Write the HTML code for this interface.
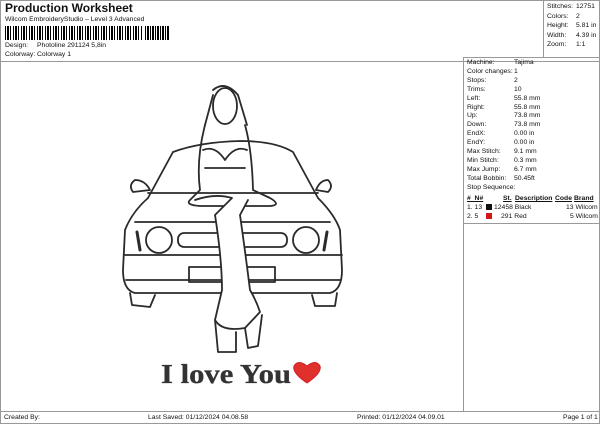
<!DOCTYPE html>
<html><head><meta charset="utf-8"><style>
*{margin:0;padding:0;box-sizing:border-box}
body{width:600px;height:424px;background:#fff;font-family:"Liberation Sans",sans-serif;color:#111;position:relative;overflow:hidden;font-size:6.8px}
.a{position:absolute;white-space:nowrap}
.ln{position:absolute;background:#999}
</style></head><body>
<div class="ln" style="left:0;top:0;width:1px;height:424px"></div>
<div class="ln" style="left:599px;top:0;width:1px;height:424px"></div>
<div class="ln" style="left:0;top:0;width:600px;height:1px"></div>
<div class="ln" style="left:0;top:61px;width:600px;height:1px"></div>
<div class="ln" style="left:463px;top:57px;width:1px;height:355px"></div>
<div class="ln" style="left:0;top:411px;width:600px;height:1px"></div>
<div class="ln" style="left:0;top:423px;width:600px;height:1px"></div>
<div class="ln" style="left:543px;top:0;width:1px;height:57px"></div>
<div class="ln" style="left:463px;top:57px;width:137px;height:1px"></div>
<div class="ln" style="left:463px;top:223px;width:137px;height:1px"></div>
<div class="a" style="left:5px;top:1px;font-size:12px;font-weight:bold">Production Worksheet</div>
<div class="a" style="left:5px;top:16px">Wilcom EmbroideryStudio – Level 3 Advanced</div>
<div class="a" style="left:5px;top:26px;width:138px;height:14px;background:repeating-linear-gradient(90deg,#000 0 1px,#fff 1px 2px,#000 2px 4px,#fff 4px 5px,#000 5px 6px,#fff 6px 8px)"></div>
<div class="a" style="left:145px;top:26px;width:24px;height:14px;background:repeating-linear-gradient(90deg,#000 0 1px,#fff 1px 2px,#000 2px 4px,#fff 4px 5px)"></div>
<div class="a" style="left:5px;top:42px">Design:</div><div class="a" style="left:37px;top:42px">Photoline 291124 5,8in</div>
<div class="a" style="left:5px;top:51px">Colorway:</div><div class="a" style="left:37px;top:51px">Colorway 1</div>
<div class="a" style="left:547px;top:2px;line-height:9.5px">Stitches:<br>Colors:<br>Height:<br>Width:<br>Zoom:</div>
<div class="a" style="left:576px;top:2px;line-height:9.5px">12751<br>2<br>5.81 in<br>4.39 in<br>1:1</div>
<div class="a" style="left:467px;top:59px;line-height:8.9px">Machine:<br>Color changes:<br>Stops:<br>Trims:<br>Left:<br>Right:<br>Up:<br>Down:<br>EndX:<br>EndY:<br>Max Stitch:<br>Min Stitch:<br>Max Jump:<br>Total Bobbin:<br>Stop Sequence:</div>
<div class="a" style="left:514px;top:59px;line-height:8.9px">Tajima<br>1<br>2<br>10<br>55.8 mm<br>55.8 mm<br>73.8 mm<br>73.8 mm<br>0.00 in<br>0.00 in<br>9.1 mm<br>0.3 mm<br>6.7 mm<br>50.45ft</div>
<div class="a" style="left:467px;top:195px;font-weight:bold;text-decoration:underline">#&nbsp;&nbsp;N#</div>
<div class="a" style="left:503px;top:195px;font-weight:bold;text-decoration:underline">St.</div>
<div class="a" style="left:515px;top:195px;font-weight:bold;text-decoration:underline">Description</div>
<div class="a" style="left:555px;top:195px;font-weight:bold;text-decoration:underline">Code</div>
<div class="a" style="left:574px;top:195px;font-weight:bold;text-decoration:underline">Brand</div>
<div class="a" style="left:467px;top:204px">1. 13</div><div class="a" style="left:486px;top:204px;width:6px;height:6px;background:#111"></div>
<div class="a" style="left:494px;top:204px">12458 Black</div><div class="a" style="left:566px;top:204px">13 Wilcom</div>
<div class="a" style="left:467px;top:213px">2. 5</div><div class="a" style="left:486px;top:213px;width:6px;height:6px;background:#d01818"></div>
<div class="a" style="left:501px;top:213px">291 Red</div><div class="a" style="left:570px;top:213px">5 Wilcom</div>
<div class="a" style="left:4px;top:414px">Created By:</div>
<div class="a" style="left:148px;top:414px">Last Saved: 01/12/2024 04.08.58</div>
<div class="a" style="left:357px;top:414px">Printed: 01/12/2024 04.09.01</div>
<div class="a" style="left:563px;top:414px">Page 1 of 1</div>
<svg class="a" style="left:0;top:0" width="600" height="424" fill="none" stroke="#2a2a2a" stroke-width="1.8" stroke-linejoin="round" stroke-linecap="round">
<path d="M173,152 Q200,142 240,141 Q275,141 293,152 L318,198 Q335,215 340,230 L342,270 Q342,290 330,293 L135,293 Q123,290 123,270 L125,230 Q132,212 148,198 Z"/>
<path d="M148,193 L318,193"/>
<path d="M135,222 L330,222"/><path d="M125,255 L342,255"/><path d="M126,280 L340,280"/>
<path d="M130,293 L132,305 L150,307 L155,295"/><path d="M312,295 L315,306 L335,306 L337,293"/>
<path d="M150,190 Q145,180 135,180 Q128,185 133,192 Z"/><path d="M316,190 Q320,180 328,180 Q334,186 328,192 Z"/>
<circle cx="159" cy="240" r="13"/><circle cx="306" cy="240" r="13"/>
<path d="M137,232 L140,250" stroke-width="3"/><path d="M327,232 L324,250" stroke-width="3"/>
<rect x="178" y="233" width="109" height="14" rx="6"/>
<rect x="189" y="267" width="86" height="15"/>
<ellipse cx="225" cy="106" rx="12" ry="18" fill="#fff"/>
<path d="M213,90 Q225,80 238,95 L247,125 M213,95 L205,125"/>
<path d="M205,125 Q196,160 200,190 L190,200 Q185,205 200,206 L270,206 Q282,205 270,198 L253,190 Q252,150 245,125"/>
<path d="M203,150 Q215,145 225,160 Q235,145 247,150 M205,168 L245,168"/>
<path d="M195,200 Q215,193 232,198 L215,215 Q222,260 222,290 L215,320 Q222,332 245,328 L260,312 Q256,300 250,290 Q245,250 240,215 L248,200" fill="#fff"/>
<path d="M215,320 L218,352 L236,352 L236,332 M245,328 L248,348 L258,346 L262,315"/>
<text x="161" y="383" font-family="Liberation Serif,serif" font-size="27" font-weight="bold" fill="#333" stroke="#333" stroke-width="0.3" textLength="130" lengthAdjust="spacingAndGlyphs">I love You</text>
<path d="M307,383 Q292,373 294,366 Q298,359 307,366 Q316,359 320,366 Q322,373 307,383 Z" fill="#e0302c" stroke="#d02020" stroke-width="1"/>
</svg>
</body></html>
